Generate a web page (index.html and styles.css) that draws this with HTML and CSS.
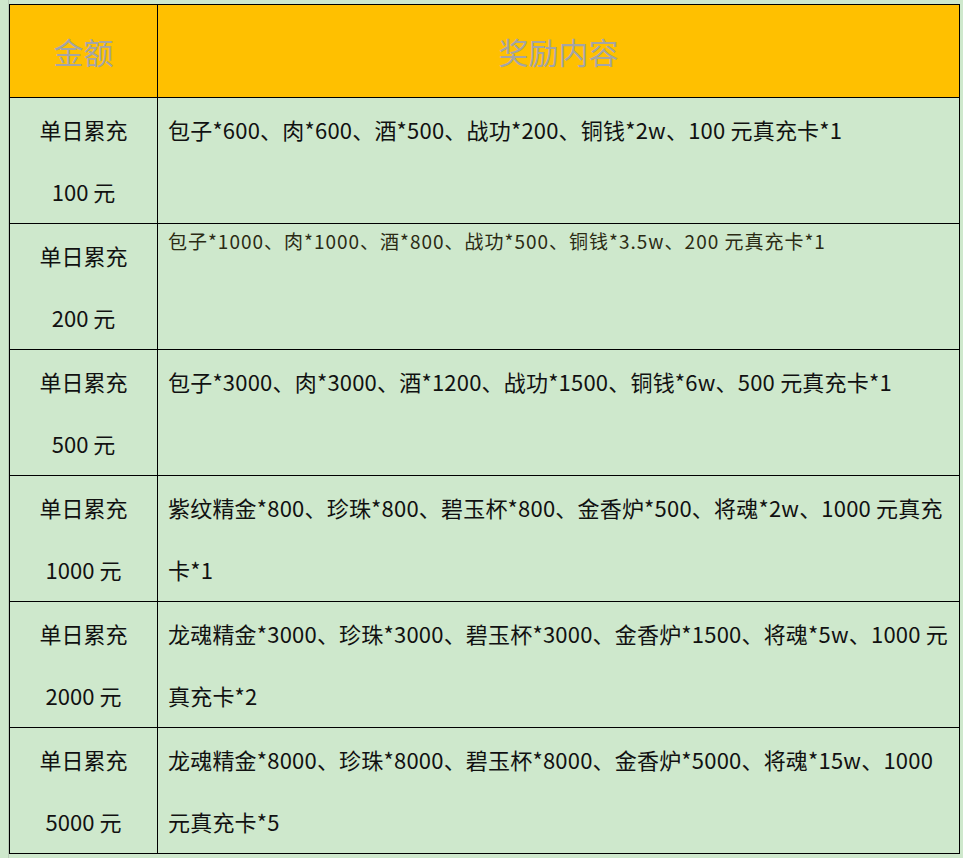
FILE: index.html
```html
<!DOCTYPE html>
<html lang="zh-CN">
<head>
<meta charset="utf-8">
<title>单日累充奖励</title>
<link rel="stylesheet" href="styles.css">
</head>
<body>
<div class="sheet">
  <table class="reward-table">
    <colgroup>
      <col class="col-amount">
      <col class="col-reward">
    </colgroup>
    <thead>
      <tr class="head-row">
        <th>金额</th>
        <th>奖励内容</th>
      </tr>
    </thead>
    <tbody>
      <tr>
        <td class="amount">单日累充<br>100 元</td>
        <td class="reward">包子*600、肉*600、酒*500、战功*200、铜钱*2w、100 元真充卡*1</td>
      </tr>
      <tr>
        <td class="amount">单日累充<br>200 元</td>
        <td class="reward small">包子*1000、肉*1000、酒*800、战功*500、铜钱*3.5w、200 元真充卡*1</td>
      </tr>
      <tr>
        <td class="amount">单日累充<br>500 元</td>
        <td class="reward">包子*3000、肉*3000、酒*1200、战功*1500、铜钱*6w、500 元真充卡*1</td>
      </tr>
      <tr>
        <td class="amount">单日累充<br>1000 元</td>
        <td class="reward">紫纹精金*800、珍珠*800、碧玉杯*800、金香炉*500、将魂*2w、1000 元真充<br>卡*1</td>
      </tr>
      <tr>
        <td class="amount">单日累充<br>2000 元</td>
        <td class="reward">龙魂精金*3000、珍珠*3000、碧玉杯*3000、金香炉*1500、将魂*5w、1000 元<br>真充卡*2</td>
      </tr>
      <tr>
        <td class="amount">单日累充<br>5000 元</td>
        <td class="reward">龙魂精金*8000、珍珠*8000、碧玉杯*8000、金香炉*5000、将魂*15w、1000<br>元真充卡*5</td>
      </tr>
    </tbody>
  </table>
</div>
</body>
</html>
```

FILE: styles.css
```css
html, body {
  margin: 0;
  padding: 0;
  background: #cee8cc;
}

body {
  font-family: "Noto Sans CJK SC", "Microsoft YaHei", sans-serif;
  color: #111;
}

.sheet {
  margin-left: 8px;
  padding-top: 4px;
  border-left: 1px solid #b8cab6;
  min-height: 854px;
}

.reward-table {
  border-collapse: collapse;
  table-layout: fixed;
  width: 950px;
  border: 1px solid #000;
}

.col-amount { width: 148px; }
.col-reward { width: 802px; }

.reward-table th,
.reward-table td {
  border: 1px solid #000;
  padding: 0;
}

.head-row {
  height: 93px;
  background: #ffc000;
}

.head-row th {
  font-weight: normal;
  font-size: 30px;
  color: #a5a5a5;
  text-align: center;
  vertical-align: middle;
}

.reward-table tbody tr {
  height: 126px;
}

.amount {
  font-size: 22px;
  line-height: 62px;
  text-align: center;
  vertical-align: top;
  padding: 0;
}

.reward {
  font-size: 22px;
  line-height: 62px;
  letter-spacing: 0.2px;
  text-align: left;
  vertical-align: top;
  padding: 0 4px 0 10px !important;
  white-space: nowrap;
}

.reward.small {
  font-size: 19px;
  line-height: 34px;
  letter-spacing: 1px;
  color: #2b2b14;
}
```
